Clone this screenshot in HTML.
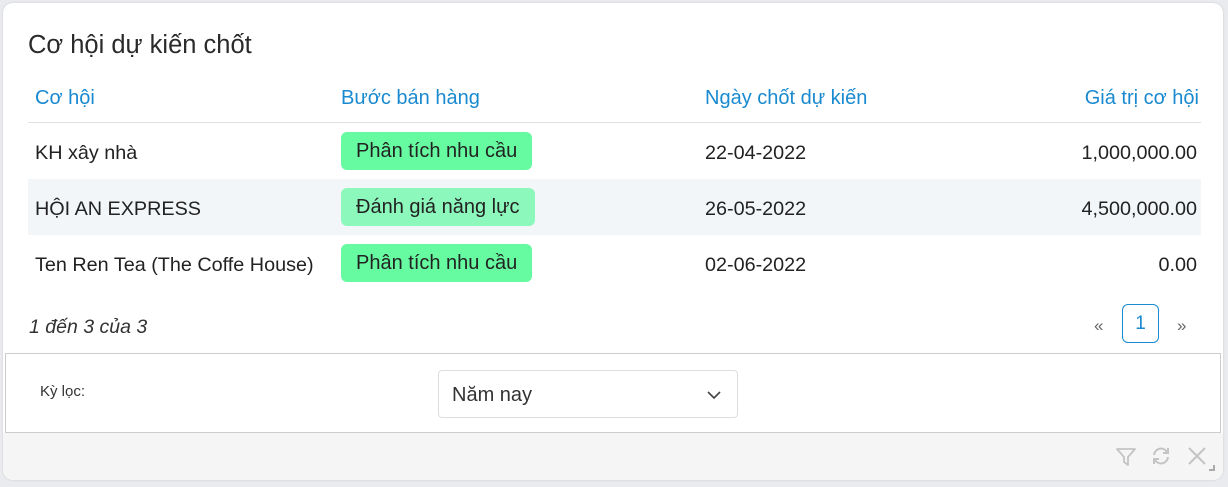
<!DOCTYPE html>
<html><head><meta charset="utf-8"><style>
body{margin:0;width:1228px;height:487px;background:#e9ebee;font-family:"Liberation Sans",sans-serif;color:#222;overflow:hidden;position:relative}
.card{position:absolute;left:3px;top:3px;width:1220px;height:477px;background:#fff;border-radius:10px;overflow:hidden;box-shadow:0 0 2px rgba(0,0,0,.15)}
.title{position:absolute;left:25px;top:28px;font-size:25.5px;color:#2a2a2a}
.h{position:absolute;top:84px;font-size:20px;color:#1a8ad0}
.line{position:absolute;left:25px;width:1173px;top:119px;height:1px;background:#dee2e6}
.row{position:absolute;left:25px;width:1173px;height:56px}
.row div{position:absolute;top:19px;font-size:19.8px;color:#222}
.badge{position:absolute;top:9px!important;height:38px;border-radius:6px;line-height:39px;padding:0 15px;background:#66fba0;font-size:20px!important}
.r{right:4px;text-align:right}
.info{position:absolute;left:26px;top:313px;font-style:italic;font-size:19.5px;color:#333}
.pg{position:absolute;top:301px;left:1119px;width:37px;height:39px;border:1px solid #1a8ad0;border-radius:6px;box-sizing:border-box;text-align:center;line-height:38px;font-size:19px;color:#1a8ad0}
.arr{position:absolute;top:313px;font-size:17px;color:#666}
.filter{position:absolute;left:2px;top:350px;width:1216px;height:80px;border:1px solid #ccc;box-sizing:border-box;background:#fff}
.foot{position:absolute;left:0;top:430px;width:1220px;height:47px;background:#f5f5f5}
.sel{position:absolute;left:432px;top:16px;width:300px;height:48px;border:1px solid #ddd;border-radius:4px;box-sizing:border-box;font-size:20px;line-height:48px;padding-left:13px;color:#333}
</style></head><body>
<div class="card">
<div class="title">Cơ hội dự kiến chốt</div>
<div class="h" style="left:32px">Cơ hội</div>
<div class="h" style="left:338px">Bước bán hàng</div>
<div class="h" style="left:702px">Ngày chốt dự kiến</div>
<div class="h" style="right:24px">Giá trị cơ hội</div>
<div class="line"></div>
<div class="row" style="top:120px"><div style="left:7px">KH xây nhà</div><div class="badge" style="left:313px">Phân tích nhu cầu</div><div style="left:677px">22-04-2022</div><div class="r">1,000,000.00</div></div>
<div class="row" style="top:176px;background:#f3f6f9"><div style="left:7px">HỘI AN EXPRESS</div><div class="badge" style="left:313px;background:#8df8bc">Đánh giá năng lực</div><div style="left:677px">26-05-2022</div><div class="r">4,500,000.00</div></div>
<div class="row" style="top:232px"><div style="left:7px">Ten Ren Tea (The Coffe House)</div><div class="badge" style="left:313px">Phân tích nhu cầu</div><div style="left:677px">02-06-2022</div><div class="r">0.00</div></div>
<div class="info">1 đến 3 của 3</div>
<div class="arr" style="left:1091px">«</div>
<div class="pg">1</div>
<div class="arr" style="left:1174px">»</div>
<div class="filter">
<div style="position:absolute;left:34px;top:29px;font-size:15px;color:#333">Kỳ lọc:</div>
<div class="sel">Năm nay<svg style="position:absolute;right:16px;top:19px" width="14" height="10" viewBox="0 0 14 10"><path d="M1 2l6 6 6-6" fill="none" stroke="#444" stroke-width="1.6"/></svg></div>
</div>
<div class="foot">
<svg style="position:absolute;left:1112px;top:13px" width="22" height="22" viewBox="0 0 22 22"><path d="M2 3h18l-7 8v8l-4-3v-5z" fill="none" stroke="#c4c4c4" stroke-width="1.8" stroke-linejoin="round"/></svg>
<svg style="position:absolute;left:1147px;top:12px" width="22" height="22" viewBox="0 0 22 22"><path d="M4 10a7 7 0 0 1 13-3M18 12a7 7 0 0 1-13 3" fill="none" stroke="#c4c4c4" stroke-width="2"/><path d="M18 3v5h-5M4 19v-5h5" fill="none" stroke="#c4c4c4" stroke-width="2"/></svg>
<svg style="position:absolute;left:1184px;top:13px" width="30" height="28" viewBox="0 0 30 28"><path d="M2 2l16 16M18 2L2 18" stroke="#c4c4c4" stroke-width="2"/><path d="M22 24h5v-5" fill="none" stroke="#aaa" stroke-width="2"/></svg>
</div>
</div>
</body></html>
